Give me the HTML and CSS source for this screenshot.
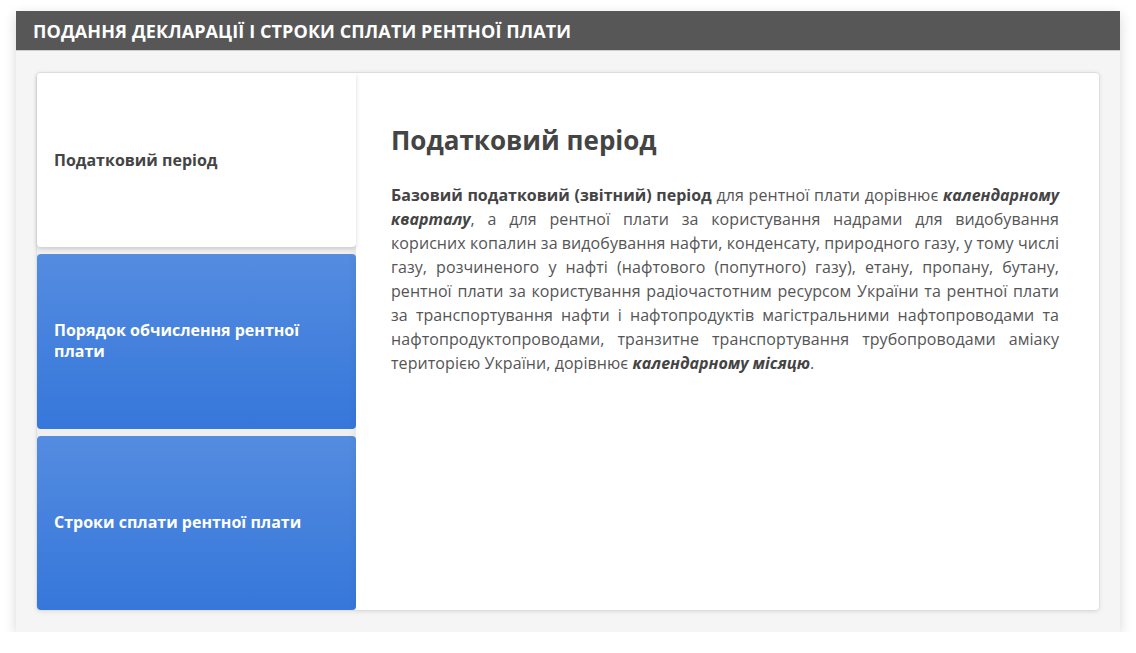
FILE: index.html
```html
<!DOCTYPE html>
<html lang="uk">
<head>
<meta charset="utf-8">
<link rel="stylesheet" href="styles.css">
</head>
<body>
<div class="panel">
  <div class="panel-head">ПОДАННЯ ДЕКЛАРАЦІЇ І СТРОКИ СПЛАТИ РЕНТНОЇ ПЛАТИ</div>
  <div class="panel-body">
    <div class="card">
      <div class="tabs">
        <div class="tab active">Податковий період</div>
        <div class="tab">Порядок обчислення рентної плати</div>
        <div class="tab">Строки сплати рентної плати</div>
      </div>
      <div class="content">
        <h1 class="title">Податковий період</h1>
        <p class="text"><b>Базовий податковий (звітний) період</b> для рентної плати дорівнює <b><i>календарному кварталу</i></b>, а для рентної плати за користування надрами для видобування корисних копалин за видобування нафти, конденсату, природного газу, у тому числі газу, розчиненого у нафті (нафтового (попутного) газу), етану, пропану, бутану, рентної плати за користування радіочастотним ресурсом України та рентної плати за транспортування нафти і нафтопродуктів магістральними нафтопроводами та нафтопродуктопроводами, транзитне транспортування трубопроводами аміаку територією України, дорівнює <b><i>календарному місяцю</i></b>.</p>
      </div>
    </div>
  </div>
</div>
</body>
</html>
```
FILE: styles.css
```css
html, body {
  margin: 0;
  padding: 0;
  background: #ffffff;
  font-family: "Open Sans", "Noto Sans", sans-serif;
}
body {
  padding: 11px 16px 0 16px;
}
.panel {
  width: 1104px;
  background: #f5f5f5;
  box-shadow: 0 4px 12px rgba(0,0,0,0.16);
}
.panel-head {
  height: 40px;
  background: #575757;
  color: #ffffff;
  font-weight: 700;
  font-size: 18px;
  letter-spacing: 0.1px;
  line-height: 40px;
  padding-left: 17px;
  border-bottom: 1px solid #cfcfcf;
  box-sizing: border-box;
}
.panel-body {
  padding: 21px 20px 21px 20px;
}
.card {
  display: flex;
  height: 539px;
  background: #ffffff;
  border: 1px solid #e0e0e0;
  border-radius: 4px;
  box-sizing: border-box;
  box-shadow: 0 1px 4px rgba(0,0,0,0.08);
}
.tabs {
  width: 319px;
  flex: none;
  display: flex;
  flex-direction: column;
  gap: 7px;
  background: #efefef;
  border-radius: 4px 0 0 4px;
}
.tab {
  flex: 1;
  display: flex;
  align-items: center;
  padding: 0 40px 0 17px;
  font-size: 16px;
  font-weight: 700;
  line-height: 21px;
  color: #ffffff;
  background: linear-gradient(to bottom, #548ce0, #3677da);
  border-radius: 4px;
}
.tab.active {
  background: #ffffff;
  color: #444444;
  border-radius: 4px 0 4px 4px;
  box-shadow: 0 2px 4px rgba(0,0,0,0.15);
  z-index: 1;
}
.content {
  flex: 1;
  padding: 48px 40px 0 35px;
  box-shadow: -3px 0 6px rgba(0,0,0,0.04);
}
.title {
  margin: 0 0 24px 0;
  font-size: 26px;
  font-weight: 700;
  color: #444444;
  line-height: 38px;
}
.text {
  margin: 0;
  font-size: 16px;
  line-height: 24px;
  color: #555555;
  text-align: justify;
  letter-spacing: 0.07px;
}
.text b {
  color: #444444;
  letter-spacing: 0;
}
```
